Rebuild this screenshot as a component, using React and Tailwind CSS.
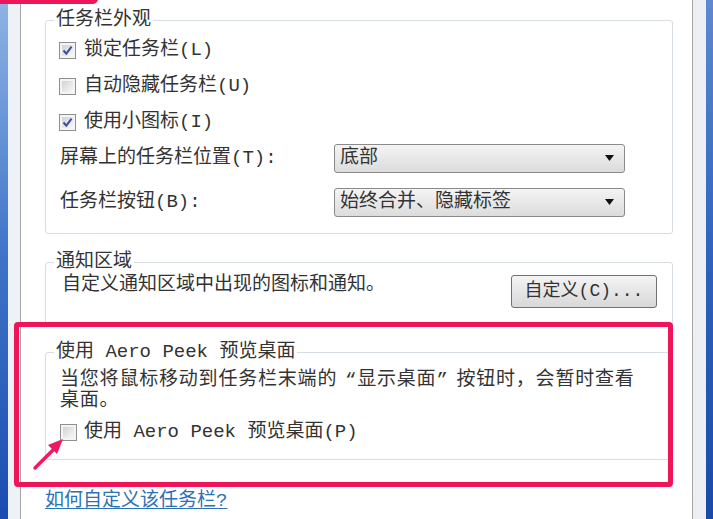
import React from "react";

const Checkbox = ({ checked }) => (
  <span className="flex h-[17px] w-[17px] shrink-0 items-center justify-center border border-[#8e8f8f] bg-[#f4f4f4] p-[2px]">
    <span className="flex h-full w-full items-center justify-center bg-gradient-to-br from-[#cfd2d6] to-[#f8f8f8]">
      {checked && (
        <svg width="11" height="11" viewBox="0 0 11 11">
          <path d="M1.5 5.5 L4.3 8.6 L9.6 1.6" fill="none" stroke="#3c4f9c" strokeWidth="2" />
        </svg>
      )}
    </span>
  </span>
);

const Select = ({ value }) => (
  <div className="flex h-[29px] w-[291px] items-center justify-between rounded-[3px] border border-[#8a8a8a] bg-gradient-to-b from-[#f4f4f4] to-[#dcdcdc] pl-[5px] pr-[10px]">
    <span>{value}</span>
    <svg width="9" height="6" viewBox="0 0 9 6">
      <path d="M0 0 L9 0 L4.5 6 Z" fill="#111" />
    </svg>
  </div>
);

const Group = ({ title, className, children }) => (
  <fieldset className={"rounded-[3px] border border-[#d6dde3] " + className}>
    <legend className="ml-[8px] px-[2px] leading-[20px]">{title}</legend>
    {children}
  </fieldset>
);

const App = () => {
  return (
    <div className="relative flex h-[519px] w-[713px] overflow-hidden bg-white text-[19px] text-[#333] font-['Liberation_Mono','Noto_Sans_CJK_SC',monospace]">
      {/* left window frame */}
      <div className="w-[8px] bg-gradient-to-b from-[#8fb4e4] via-[#3f73c8] to-[#1b4db0]" />
      <div className="w-[12px] bg-[#eef1f5]" />

      {/* tab page */}
      <div className="w-[673px] border-x border-[#a5a5a5] bg-white pl-[24px] pr-[19px] pt-[10px]">
        <Group title="任务栏外观" className="pb-[13px]">
          <div className="pt-[2px]">
            <div className="flex h-[36px] items-center gap-[8px] pl-[13px]">
              <Checkbox checked />
              <span>锁定任务栏(L)</span>
            </div>
            <div className="flex h-[36px] items-center gap-[8px] pl-[13px]">
              <Checkbox />
              <span>自动隐藏任务栏(U)</span>
            </div>
            <div className="flex h-[36px] items-center gap-[8px] pl-[13px]">
              <Checkbox checked />
              <span>使用小图标(I)</span>
            </div>
            <div className="flex h-[36px] items-center pl-[14px]">
              <span className="w-[274px]">屏幕上的任务栏位置(T):</span>
              <Select value="底部" />
            </div>
            <div className="mt-[8px] flex h-[36px] items-center pl-[14px]">
              <span className="w-[274px]">任务栏按钮(B):</span>
              <Select value="始终合并、隐藏标签" />
            </div>
          </div>
        </Group>

        <Group title="通知区域" className="mt-[18px] pb-[17px]">
          <div className="flex items-start justify-between pl-[16px] pr-[15px]">
            <span className="mt-[3px] leading-[20px]">自定义通知区域中出现的图标和通知。</span>
            <button className="mt-[3px] flex h-[33px] w-[146px] items-center justify-center rounded-[3px] border border-[#707070] bg-gradient-to-b from-[#f4f4f4] to-[#d8d8d8] text-[18px] text-[#333]">
              自定义(C)...
            </button>
          </div>
        </Group>

        <Group title="使用 Aero Peek 预览桌面" className="mt-[16px] pb-[10px]">
          <div className="pl-[14px] pt-[8px] leading-[21px] tracking-[0.8px]">
            当您将鼠标移动到任务栏末端的
            <span className="inline-block w-[20px] text-right">“</span>
            显示桌面
            <span className="inline-block w-[20px] text-left">”</span>
            按钮时，会暂时查看
            <br />
            桌面。
          </div>
          <div className="mt-[3px] flex h-[34px] items-center gap-[7px] pl-[14px]">
            <Checkbox />
            <span>使用 Aero Peek 预览桌面(P)</span>
          </div>
        </Group>

        <div className="mt-[29px] leading-[24px]">
          <a className="text-[#2a72b5] underline decoration-1 underline-offset-2">如何自定义该任务栏?</a>
        </div>
      </div>

      {/* right window frame */}
      <div className="w-[13px] bg-[#eceff3]" />
      <div className="w-[7px] bg-gradient-to-b from-[#5b8ad0] via-[#2e62bd] to-[#1a4aa8]" />

      {/* annotations */}
      <div className="absolute left-[-6px] top-[-12px] h-[16px] w-[104px] rounded-[5px] border-[5px] border-[#ee1558]" />
      <div className="absolute left-[14px] top-[322px] h-[165px] w-[659px] rounded-[4px] border-[5px] border-[#ee1558]" />
      <svg className="absolute left-[30px] top-[434px]" width="40" height="40" viewBox="0 0 40 40">
        <path d="M5 34 L26 13" stroke="#ee1a5f" strokeWidth="3.5" strokeLinecap="round" />
        <path d="M33 5 L18 11 L27 20 Z" fill="#ee1a5f" />
      </svg>
    </div>
  );
};

export default App;
